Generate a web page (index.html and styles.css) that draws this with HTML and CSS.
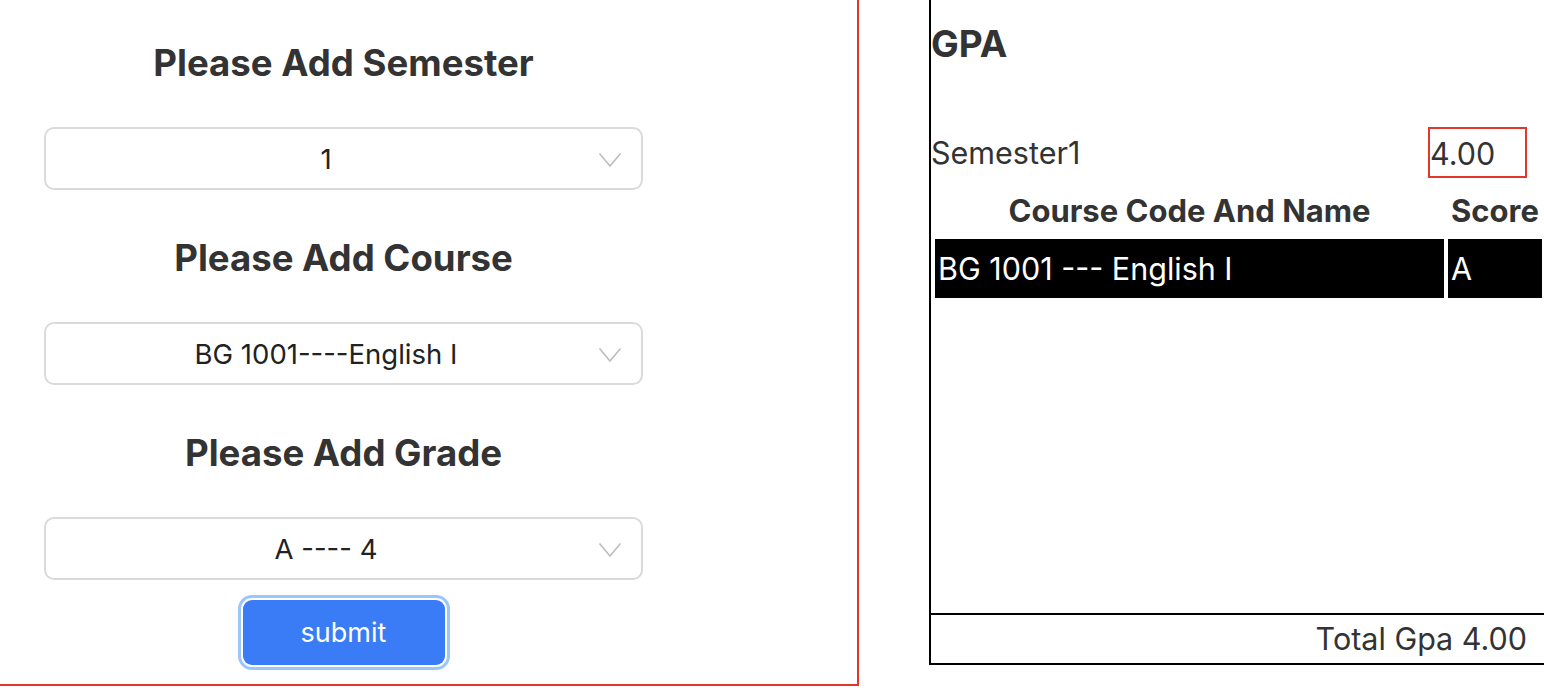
FILE: index.html
```html
<!DOCTYPE html>
<html lang="en">
<head>
<meta charset="utf-8">
<title>GPA Calculator</title>
<link rel="stylesheet" href="styles.css">
</head>
<body>
<main class="page">
  <section class="form-panel">
    <form class="form">
      <h2 class="form-title">Please Add Semester</h2>
      <div class="select">
        <span class="select-value">1</span>
        <svg class="chevron" width="24" height="16" viewBox="0 0 24 16"><polyline points="1.5,1.5 12,14 22.5,1.5" fill="none" stroke="#bdbdbd" stroke-width="1.6"/></svg>
      </div>
      <h2 class="form-title">Please Add Course</h2>
      <div class="select">
        <span class="select-value">BG 1001----English I</span>
        <svg class="chevron" width="24" height="16" viewBox="0 0 24 16"><polyline points="1.5,1.5 12,14 22.5,1.5" fill="none" stroke="#bdbdbd" stroke-width="1.6"/></svg>
      </div>
      <h2 class="form-title">Please Add Grade</h2>
      <div class="select">
        <span class="select-value">A ---- 4</span>
        <svg class="chevron" width="24" height="16" viewBox="0 0 24 16"><polyline points="1.5,1.5 12,14 22.5,1.5" fill="none" stroke="#bdbdbd" stroke-width="1.6"/></svg>
      </div>
      <button type="button" class="submit">submit</button>
    </form>
  </section>
  <section class="gpa-panel">
    <div class="gpa-body">
      <h2 class="gpa-title">GPA</h2>
      <div class="semester-row">
        <span class="semester-name">Semester1</span>
        <span class="semester-gpa">4.00</span>
      </div>
      <table class="courses">
        <thead>
          <tr><th class="col-name">Course Code And Name</th><th class="col-score">Score</th></tr>
        </thead>
        <tbody>
          <tr><td>BG 1001 --- English I</td><td>A</td></tr>
        </tbody>
      </table>
    </div>
    <div class="gpa-footer">Total Gpa 4.00</div>
  </section>
</main>
</body>
</html>
```
FILE: styles.css
```css
html, body {
  margin: 0;
  padding: 0;
  overflow: hidden;
  background: #fff;
}
body {
  font-family: Inter, "Liberation Sans", sans-serif;
  color: #333;
}
.page {
  display: flex;
  align-items: flex-start;
  gap: 70px;
  width: 1620px;
}
.form-panel {
  width: 857px;
  height: 684px;
  border-right: 2px solid #e2382c;
  border-bottom: 2px solid #e2382c;
  flex: none;
}
.form {
  width: 599px;
  margin-left: 44px;
  padding-top: 43px;
  display: flex;
  flex-direction: column;
  align-items: center;
}
.form-title {
  margin: 0 0 44px;
  height: 40px;
  line-height: 40px;
  font-size: 36.6px;
  font-weight: 700;
  color: #333;
  white-space: nowrap;
}
.select {
  box-sizing: border-box;
  width: 599px;
  height: 63px;
  border: 2px solid #dadada;
  border-radius: 10px;
  display: flex;
  align-items: center;
  position: relative;
  padding-right: 35px;
  margin-bottom: 48px;
}
.select:last-of-type {
  margin-bottom: 20px;
}
.select-value {
  flex: 1;
  text-align: center;
  font-size: 27.5px;
  color: #222;
}
.chevron {
  position: absolute;
  right: 19px;
  top: 23px;
}
.submit {
  width: 202px;
  height: 65px;
  border: none;
  border-radius: 9px;
  background: #3a7bf6;
  color: #fff;
  font-family: Inter, "Liberation Sans", sans-serif;
  font-size: 27px;
  box-shadow: 0 0 0 2px #fff, 0 0 0 5px #9ec5fa;
  padding: 0;
}
.gpa-panel {
  flex: none;
  width: 615px;
  border-left: 2px solid #000;
  border-right: 2px solid #000;
  border-bottom: 2px solid #000;
}
.gpa-body {
  height: 613px;
}
.gpa-title {
  margin: 0;
  padding-top: 24px;
  font-size: 37px;
  line-height: 40px;
  font-weight: 700;
  color: #333;
}
.semester-row {
  margin-top: 63px;
  display: flex;
  justify-content: space-between;
  align-items: center;
  padding-right: 19px;
}
.semester-name {
  font-size: 30.5px;
  color: #333;
}
.semester-gpa {
  box-sizing: border-box;
  width: 99px;
  height: 51px;
  border: 2px solid #e2382c;
  font-size: 30.5px;
  line-height: 49px;
  color: #333;
  white-space: nowrap;
}
.courses {
  border-spacing: 4px;
  margin-top: 6px;
}
.courses th {
  font-size: 31px;
  font-weight: 700;
  color: #333;
  padding: 2px 3px 4px;
  height: 41px;
  white-space: nowrap;
}
.col-name {
  width: 503px;
}
.courses td {
  background: #000;
  color: #fff;
  font-size: 30.5px;
  padding: 0 3px;
  height: 59px;
}
.gpa-footer {
  border-top: 2px solid #000;
  height: 48px;
  line-height: 48px;
  text-align: right;
  padding-right: 19px;
  font-size: 30.5px;
  color: #333;
}
```
